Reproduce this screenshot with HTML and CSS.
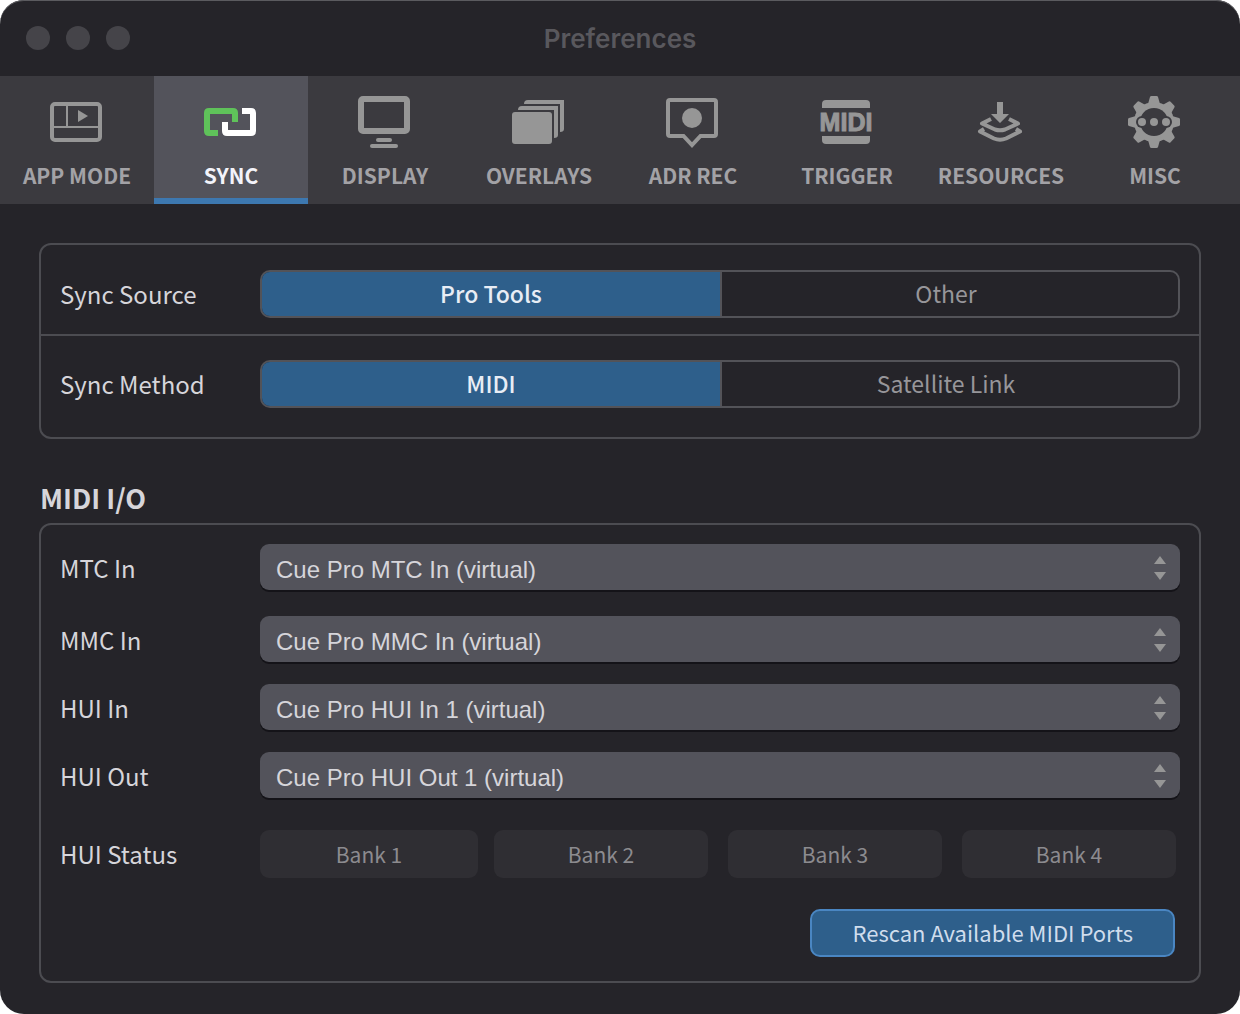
FILE: index.html
```html
<!DOCTYPE html>
<html lang="en">
<head>
  <meta charset="UTF-8">
  <title>Preferences</title>
  <link rel="stylesheet" href="styles.css">
</head>
<body>

<div class="window">
  <header class="titlebar">
    <div class="lights">
      <button class="light" aria-label="Close"></button>
      <button class="light" aria-label="Minimize"></button>
      <button class="light" aria-label="Zoom"></button>
    </div>
    <h1>Preferences</h1>
  </header>

  <nav class="tabs">
    <button class="tab">
      <svg viewBox="0 0 54 56" aria-hidden="true">
        <rect x="2" y="10" width="48" height="36" rx="3" fill="none" stroke="currentColor" stroke-width="4"/>
        <path d="M17 12V33M3 33H49" fill="none" stroke="currentColor" stroke-width="2"/>
        <path d="M28 16L38 22L28 28Z"/>
      </svg>
      <span>APP MODE</span>
    </button>
    <button class="tab active">
      <svg viewBox="0 0 54 56" aria-hidden="true">
        <path class="link-green" d="M14 39H5Q3 39 3 37V19Q3 17 5 17H29Q31 17 31 19V28" fill="none" stroke-width="6"/>
        <path d="M21 28V37Q21 39 23 39H47Q49 39 49 37V19Q49 17 47 17H38" fill="none" stroke="currentColor" stroke-width="6"/>
      </svg>
      <span>SYNC</span>
    </button>
    <button class="tab">
      <svg viewBox="0 0 54 56" aria-hidden="true">
        <rect x="3" y="5" width="46" height="32" rx="2" fill="none" stroke="currentColor" stroke-width="6"/>
        <rect x="18" y="44" width="16" height="4" rx="2"/>
        <rect x="12" y="50" width="28" height="4" rx="2"/>
      </svg>
      <span>DISPLAY</span>
    </button>
    <button class="tab">
      <svg viewBox="0 0 54 56" aria-hidden="true">
        <rect x="0" y="18" width="40" height="32" rx="3"/>
        <path d="M6 16Q6 12 10 12H46V41Q46 44 42 44V16Z"/>
        <path d="M12 10Q12 6 16 6H52V35Q52 38 48 38V10Z"/>
      </svg>
      <span>OVERLAYS</span>
    </button>
    <button class="tab">
      <svg viewBox="0 0 54 56" aria-hidden="true">
        <path d="M4 6H48Q50 6 50 8V40Q50 42 48 42H34.500L26 51L17.500 42H4Q2 42 2 40V8Q2 6 4 6Z" fill="none" stroke="currentColor" stroke-width="4"/>
        <circle cx="26" cy="24" r="10"/>
      </svg>
      <span>ADR REC</span>
    </button>
    <button class="tab">
      <svg viewBox="0 0 54 56" aria-hidden="true">
        <path d="M2 14V10Q2 6 6 6H46Q50 6 50 10V14Z"/>
        <text class="midi-mark" x="26" y="37" text-anchor="middle">MIDI</text>
        <path d="M2 42V46Q2 50 6 50H46Q50 50 50 46V42Z"/>
      </svg>
      <span>TRIGGER</span>
    </button>
    <button class="tab">
      <svg viewBox="0 0 54 56" aria-hidden="true">
        <path d="M23 8H29V20H35L26 29L17 20H23Z"/>
        <path d="M17 25L8 29.500L21 35.500Q26 37 31 35.500L44 29.500L35 25" fill="none" stroke="currentColor" stroke-width="4" stroke-linejoin="round"/>
        <path d="M10 35L6 37.500L20 44.500Q26 47 32 44.500L46 37.500L42 35" fill="none" stroke="currentColor" stroke-width="4" stroke-linejoin="round"/>
      </svg>
      <span>RESOURCES</span>
    </button>
    <button class="tab">
      <svg viewBox="0 0 54 56" aria-hidden="true">
        <defs>
          <path id="teeth" d="M20 10L22 3Q22.300 2 23.500 2H28.500Q29.700 2 30 3L32 10V46L30 53Q29.700 54 28.500 54H23.500Q22.300 54 22 53L20 46Z"/>
          <mask id="gearHole">
            <rect width="54" height="56" fill="#fff"/>
            <circle cx="26" cy="28" r="14" fill="#000"/>
            <circle cx="14" cy="28" r="6" fill="#000"/>
            <circle cx="38" cy="28" r="6" fill="#000"/>
          </mask>
        </defs>
        <g mask="url(#gearHole)">
          <circle cx="26" cy="28" r="20"/>
          <use href="#teeth"/>
          <use href="#teeth" transform="rotate(45 26 28)"/>
          <use href="#teeth" transform="rotate(90 26 28)"/>
          <use href="#teeth" transform="rotate(135 26 28)"/>
        </g>
        <circle cx="14" cy="28" r="4"/>
        <circle cx="26" cy="28" r="4"/>
        <circle cx="38" cy="28" r="4"/>
      </svg>
      <span>MISC</span>
    </button>
  </nav>

  <main class="content">
    <section class="group">
      <div class="row sync-row" role="radiogroup" aria-labelledby="sourceLabel">
        <span class="row-label" id="sourceLabel">Sync Source</span>
        <div class="segmented">
          <label><input type="radio" name="source" checked><span>Pro Tools</span></label>
          <label><input type="radio" name="source"><span>Other</span></label>
        </div>
      </div>
      <div class="row sync-row" role="radiogroup" aria-labelledby="methodLabel">
        <span class="row-label" id="methodLabel">Sync Method</span>
        <div class="segmented">
          <label><input type="radio" name="method" checked><span>MIDI</span></label>
          <label><input type="radio" name="method"><span>Satellite Link</span></label>
        </div>
      </div>
    </section>

    <h2>MIDI I/O</h2>
    <section class="group ports">
      <div class="row port-row mtc">
        <label class="row-label" for="mtcIn">MTC In</label>
        <select id="mtcIn"><option>Cue Pro MTC In (virtual)</option></select>
      </div>
      <div class="row port-row">
        <label class="row-label" for="mmcIn">MMC In</label>
        <select id="mmcIn"><option>Cue Pro MMC In (virtual)</option></select>
      </div>
      <div class="row port-row">
        <label class="row-label" for="huiIn">HUI In</label>
        <select id="huiIn"><option>Cue Pro HUI In 1 (virtual)</option></select>
      </div>
      <div class="row port-row">
        <label class="row-label" for="huiOut">HUI Out</label>
        <select id="huiOut"><option>Cue Pro HUI Out 1 (virtual)</option></select>
      </div>
      <div class="row status-row">
        <span class="row-label">HUI Status</span>
        <div class="banks">
          <span class="bank">Bank 1</span>
          <span class="bank">Bank 2</span>
          <span class="bank">Bank 3</span>
          <span class="bank">Bank 4</span>
        </div>
      </div>
      <div class="actions">
        <button class="rescan">Rescan Available MIDI Ports</button>
      </div>
    </section>
  </main>
</div>

</body>
</html>
```
FILE: styles.css
```css
* {
  box-sizing: border-box;
}
body {
  margin: 0;
  background: #fff;
  color: #d6d5da;
  font-family: "Noto Sans CJK SC", "Noto Sans", sans-serif;
  font-size: 24px;
}
button, select {
  font: inherit;
  color: inherit;
  border: none;
  margin: 0;
}
.window {
  min-height: 100vh;
  background: #252429;
  border-radius: 24px;
  box-shadow: inset 0 1px 0 #5b5b5f;
}

/* title bar */
.titlebar {
  display: grid;
  grid-template-columns: 1fr auto 1fr;
  align-items: center;
  height: 76px;
  padding: 0 26px;
}
.lights {
  display: flex;
  gap: 16px;
}
.light {
  width: 24px;
  height: 24px;
  padding: 0;
  border-radius: 50%;
  background: #454449;
}
h1 {
  margin: 0;
  padding-top: 2px;
  font: 600 26px/32px Inter, sans-serif;
  color: #59585d;
}

/* tabs */
.tabs {
  display: grid;
  grid-template-columns: repeat(8, 1fr);
  padding-right: 8px;
  background: #3b3a3f;
}
.tab {
  display: flex;
  flex-direction: column;
  align-items: center;
  gap: 9px;
  height: 128px;
  padding: 18px 0 0;
  background: none;
  border-bottom: 6px solid transparent;
  color: #969696;
  font-size: 21px;
  font-weight: 700;
  line-height: 32px;
  white-space: nowrap;
}
.tab svg {
  width: 54px;
  height: 56px;
  fill: currentColor;
}
.tab span {
  color: #a3a2a6;
}
.tab.active {
  background: #53535b;
  border-bottom-color: #3d78b0;
  color: #fff;
}
.tab.active span {
  color: #f3f3fa;
}
.link-green {
  stroke: #5fc25a;
}
.midi-mark {
  font: 700 25px "Liberation Sans", sans-serif;
  stroke: currentColor;
  stroke-width: 1px;
}

/* groups */
.content {
  padding: 39px 39px 31px;
}
.group {
  border: 2px solid #4c4c51;
  border-radius: 12px;
}
h2 {
  margin: 39px 0 5px 1px;
  font-size: 27px;
  font-weight: 700;
  line-height: 40px;
}
.row {
  display: grid;
  grid-template-columns: 200px 1fr;
  align-items: center;
  padding: 0 19px;
}
.row-label {
  line-height: 48px;
}
.sync-row {
  padding-top: 25px;
  padding-bottom: 16px;
}
.sync-row + .sync-row {
  border-top: 2px solid #4c4c51;
  padding-top: 24px;
  padding-bottom: 29px;
}

.segmented {
  display: grid;
  grid-template-columns: 1fr 1fr;
  height: 48px;
  border: 2px solid #535358;
  border-radius: 10px;
  overflow: hidden;
  font-size: 23px;
  line-height: 42px;
  text-align: center;
  color: #97969a;
}
.segmented label + label {
  border-left: 2px solid #535358;
  padding-right: 8px;
}
.segmented input {
  position: absolute;
  opacity: 0;
}
.segmented span {
  display: block;
  height: 44px;
}
.segmented input:checked + span {
  background: #2e5f8b;
  color: #e8edf5;
  font-weight: 500;
}

/* midi ports */
.ports {
  padding: 19px 0 24px;
}
.port-row {
  margin-bottom: 20px;
}
.port-row.mtc {
  margin-bottom: 24px;
}
select {
  appearance: none;
  width: 100%;
  height: 46px;
  margin-bottom: 2px;
  padding: 4px 40px 0 16px;
  border-radius: 9px;
  background: #53535b url("data:image/svg+xml,%3Csvg xmlns='http://www.w3.org/2000/svg' width='12' height='24'%3E%3Cpath d='M0 8L6 0L12 8ZM0 16H12L6 24Z' fill='%23969696'/%3E%3C/svg%3E") no-repeat right 14px top 12px;
  box-shadow: 0 2px 0 #141318;
  font: 24px "Liberation Sans", sans-serif;
}
.status-row {
  padding-top: 10px;
  padding-right: 23px;
}
.banks {
  display: grid;
  grid-template-columns: repeat(4, 1fr);
  gap: 20px;
}
.bank {
  height: 48px;
  border-radius: 9px;
  background: #2f2e33;
  color: #8c8b8f;
  font-size: 21px;
  line-height: 48px;
  text-align: center;
}
.bank:first-child {
  margin-right: -4px;
}
.actions {
  display: flex;
  justify-content: flex-end;
  padding: 31px 24px 0;
}
.rescan {
  height: 48px;
  padding: 0 40px 2px;
  border: 2px solid #4a86c2;
  border-radius: 10px;
  background: #2e5f8b;
  color: #d0dded;
  font-size: 22px;
  line-height: 42px;
}
```
